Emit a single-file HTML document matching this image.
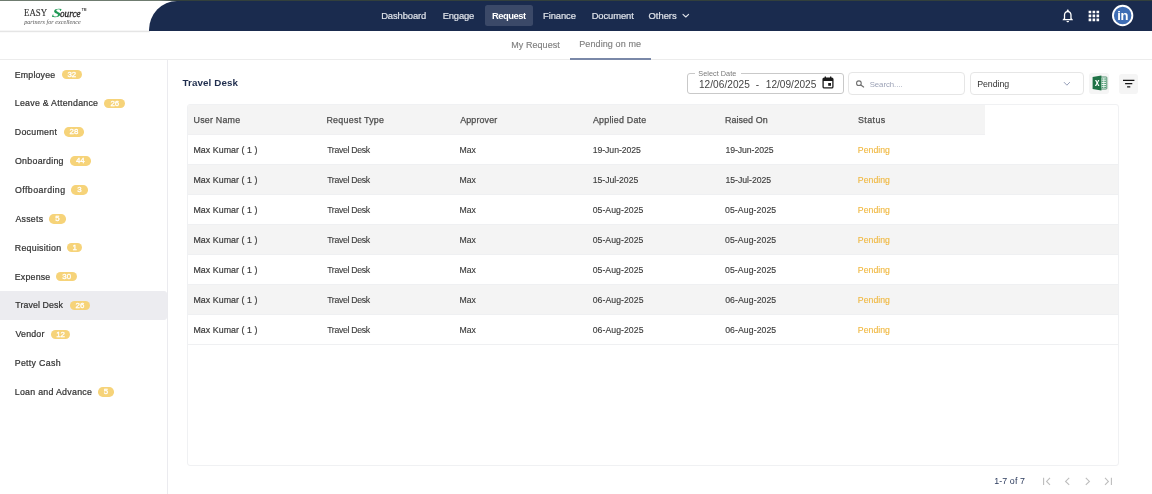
<!DOCTYPE html>
<html lang="en">
<head>
<meta charset="utf-8">
<title>Travel Desk - Pending on me</title>
<style>
*{box-sizing:border-box;margin:0;padding:0}
html,body{width:1152px;height:494px;overflow:hidden;background:#fff}
body{position:relative;font-family:"Liberation Sans",sans-serif;color:#3a3a3a;-webkit-font-smoothing:antialiased}
#app{position:absolute;left:0;top:0;width:1152px;height:494px;overflow:hidden;background:#fff;will-change:transform}
.abs{position:absolute}
.t{position:absolute;white-space:nowrap;line-height:1}
/* top strip */
#topline{left:0;top:0;width:1152px;height:1px;background:#6f7c70}
#topline2{left:160px;top:0;width:992px;height:1px;background:linear-gradient(90deg,rgba(51,64,60,0) 0,#33403c 16px)}
/* header */
#hdrshadow{left:0;top:30px;width:150px;height:3px;background:linear-gradient(#f6f6f6 0,#f6f6f6 33.3%,#e5e5e5 33.3%,#e5e5e5 66.6%,#fafafa 66.6%)}
#navy{left:149px;top:1px;width:1003px;height:29.7px;background:#1a2b4e;border-top-left-radius:28px 29px}
.nav{font-size:9.4px;color:#dfe3ea;-webkit-text-stroke:.2px #dfe3ea;top:10.6px}
#pill{left:485px;top:5.2px;width:48.3px;height:21px;background:#3b4968;border-radius:2.5px}
/* tabs */
#tabline{left:0;top:59px;width:1152px;height:1px;background:#ececec}
#tabul{left:570px;top:57.6px;width:81px;height:2px;background:#7a88a8}
.tab{font-size:9px;color:#808080;-webkit-text-stroke:.15px #808080}
/* sidebar */
#sideborder{left:167px;top:60px;width:1px;height:434px;background:#ebebef}
#sideactive{left:0;top:290.9px;width:167.2px;height:28.9px;background:#ececf0;border-radius:0 3px 3px 0}
.si{font-size:8.8px;color:#333;left:15.3px;-webkit-text-stroke:.22px #333}
.bd{position:absolute;height:9.5px;border-radius:4.75px;background:#f6d379;color:#fff;font-size:7.9px;line-height:9.7px;text-align:center;-webkit-text-stroke:.3px #fff;letter-spacing:-.1px}
/* main */
#title{font-size:10.1px;font-weight:bold;color:#1f2d4d}
#tbl{left:187px;top:104px;width:931.5px;height:361.5px;border:1px solid #f0f1f3;border-radius:3px;background:#fff}
#thead{left:188px;top:105px;width:797px;height:30px;background:#f4f4f4;box-shadow:inset 0 -1px 0 #f0f0f2;border-top-left-radius:2px}
.row{left:188px;width:929.5px;height:30px;box-shadow:inset 0 -1px 0 #eff0f2}
.alt{background:#f4f4f4}
.th{font-size:8.9px;color:#4d4d4d;-webkit-text-stroke:.25px #4d4d4d;top:114.6px}
.c1{font-size:8.8px;color:#3a3a3a;-webkit-text-stroke:.2px #3a3a3a}
.c2{font-size:8.7px;color:#3a3a3a;-webkit-text-stroke:.12px #3a3a3a}
.pend{color:#f0b840;-webkit-text-stroke:.12px #f0b840}
.dt{font-size:10.1px;color:#454545;letter-spacing:0}
</style>
</head>
<body>
<div id="app">
<div class="abs" id="hdrshadow"></div>
<div class="abs" id="navy"></div>
<div class="abs" id="topline"></div>
<div class="abs" id="topline2"></div>

<!-- logo -->
<div class="t" id="lg1" style="left:24.40px;top:7.35px;font-size:11.4px;font-family:'Liberation Serif',serif;color:#333;-webkit-text-stroke:.15px #333;transform:scaleX(.775);transform-origin:0 0;">EASY</div>
<div class="t" id="lg2" style="left:50.60px;top:6.55px;font-size:12.6px;font-family:'Liberation Serif',serif;font-style:italic;font-weight:bold;color:#1f9a55;transform:scaleX(1.32) skewX(-8deg);transform-origin:0 100%;">S</div>
<div class="t" id="lg3" style="left:60.20px;top:7.69px;font-size:11px;font-family:'Liberation Serif',serif;font-style:italic;color:#222;-webkit-text-stroke:.3px #222;transform:scaleX(.84);transform-origin:0 0;">ource</div>
<div class="t" id="lg4" style="left:81.70px;top:9.39px;font-size:3.2px;color:#333;font-weight:bold;">TM</div>
<div class="t" id="lg5" style="left:24.20px;top:19.05px;font-size:6.15px;font-family:'Liberation Serif',serif;font-style:italic;color:#555;">partners for excellence</div>

<svg class="abs" style="left:681px;top:12px" width="10" height="8" viewBox="0 0 10 8"><path d="M2 2.3 L4.8 5 L7.6 2.3" fill="none" stroke="#dfe3ea" stroke-width="1.1" stroke-linecap="round" stroke-linejoin="round"/></svg>

<!-- header icons -->
<svg class="abs" style="left:1060.2px;top:8px" width="15.5" height="15.5" viewBox="0 0 24 24"><path fill="#fff" d="M12 22c1.1 0 2-.9 2-2h-4c0 1.1.9 2 2 2zm6-6v-5c0-3.07-1.63-5.64-4.5-6.32V4c0-.83-.67-1.5-1.5-1.5s-1.5.67-1.5 1.5v.68C7.64 5.36 6 7.92 6 11v5l-2 2v1h16v-1l-2-2zm-2 1H8v-6c0-2.480 1.510-4.500 4-4.500s4 2.020 4 4.500v6z"/></svg>
<svg class="abs" style="left:1085.8px;top:8px" width="15.75" height="15.75" viewBox="0 0 24 24"><path fill="#fff" d="M4 8h4V4H4v4zm6 12h4v-4h-4v4zm-6 0h4v-4H4v4zm0-6h4v-4H4v4zm6 0h4v-4h-4v4zm6-10v4h4V4h-4zm-6 4h4V4h-4v4zm6 6h4v-4h-4v4zm0 6h4v-4h-4v4z"/></svg>
<svg class="abs" style="left:1110px;top:3px" width="26" height="26" viewBox="0 0 26 26"><circle cx="12.65" cy="12.5" r="9.7" fill="#3e6db4" stroke="#fff" stroke-width="1.9"/></svg>
<div class="t" id="avt" style="left:1117.20px;top:9.00px;font-size:13px;font-weight:bold;color:#fff;letter-spacing:-.3px;">in</div>

<div class="abs" id="pill"></div>
<div class="t nav" id="n1" style="left:381.14px;top:11.04px;font-size:9.4px;letter-spacing:-0.092px;">Dashboard</div>
<div class="t nav" id="n2" style="left:442.81px;top:11.04px;font-size:9.4px;letter-spacing:-0.200px;">Engage</div>
<div class="t nav" id="n3" style="left:492.04px;top:11.04px;font-size:9.4px;letter-spacing:-0.502px;color:#fff;font-weight:bold;-webkit-text-stroke:0;">Request</div>
<div class="t nav" id="n4" style="left:543.05px;top:11.04px;font-size:9.4px;letter-spacing:-0.081px;">Finance</div>
<div class="t nav" id="n5" style="left:591.64px;top:11.04px;font-size:9.4px;letter-spacing:-0.073px;">Document</div>
<div class="t nav" id="n6" style="left:648.55px;top:11.04px;font-size:9.4px;letter-spacing:0.000px;">Others</div>
<div class="abs" id="tabline"></div><div class="abs" id="tabul"></div>
<div class="t tab" id="tb1" style="left:511.26px;top:41.38px;font-size:9px;letter-spacing:0.057px;">My Request</div>
<div class="t tab" id="tb2" style="left:579.21px;top:40.38px;font-size:9px;letter-spacing:0.104px;">Pending on me</div>
<div class="abs" id="sideborder"></div><div class="abs" id="sideactive"></div>
<div class="t si" id="s1" style="left:14.75px;top:70.55px;font-size:8.8px;letter-spacing:0.180px;">Employee</div>
<div class="bd" style="left:61.9px;top:69.70px;width:19.7px">32</div>
<div class="t si" id="s2" style="left:14.75px;top:98.55px;font-size:8.8px;letter-spacing:0.265px;">Leave &amp; Attendance</div>
<div class="bd" style="left:104.4px;top:98.57px;width:20.6px">26</div>
<div class="t si" id="s3" style="left:14.75px;top:127.55px;font-size:8.8px;letter-spacing:0.287px;">Document</div>
<div class="bd" style="left:63.6px;top:127.44px;width:20.6px">28</div>
<div class="t si" id="s4" style="left:15.00px;top:156.55px;font-size:8.8px;letter-spacing:0.281px;">Onboarding</div>
<div class="bd" style="left:69.6px;top:156.31px;width:21.4px">44</div>
<div class="t si" id="s5" style="left:15.00px;top:185.55px;font-size:8.8px;letter-spacing:0.425px;">Offboarding</div>
<div class="bd" style="left:71.4px;top:185.18px;width:16.2px">3</div>
<div class="t si" id="s6" style="left:15.46px;top:214.55px;font-size:8.8px;letter-spacing:0.250px;">Assets</div>
<div class="bd" style="left:49.0px;top:214.05px;width:16.6px">5</div>
<div class="t si" id="s7" style="left:14.75px;top:243.55px;font-size:8.8px;letter-spacing:0.275px;">Requisition</div>
<div class="bd" style="left:67.2px;top:242.92px;width:15.0px">1</div>
<div class="t si" id="s8" style="left:14.75px;top:272.55px;font-size:8.8px;letter-spacing:0.209px;">Expense</div>
<div class="bd" style="left:56.3px;top:271.79px;width:20.7px">30</div>
<div class="t si" id="s9" style="left:15.25px;top:300.55px;font-size:8.8px;letter-spacing:0.100px;">Travel Desk</div>
<div class="bd" style="left:69.7px;top:300.66px;width:20.4px">26</div>
<div class="t si" id="s10" style="left:15.46px;top:329.55px;font-size:8.8px;letter-spacing:0.200px;">Vendor</div>
<div class="bd" style="left:51.0px;top:329.53px;width:19.2px">12</div>
<div class="t si" id="s11" style="left:14.75px;top:358.55px;font-size:8.8px;letter-spacing:0.306px;">Petty Cash</div>
<div class="t si" id="s12" style="left:14.75px;top:387.55px;font-size:8.8px;letter-spacing:0.283px;">Loan and Advance</div>
<div class="bd" style="left:97.9px;top:387.27px;width:16.0px">5</div>
<div class="t" id="title" style="left:182.49px;top:77.70px;font-size:9.8px;letter-spacing:0.100px;">Travel Desk</div>
<div id="toolbar">
<!-- date range -->
<div class="abs" id="datebox" style="left:686.6px;top:73.4px;width:157.2px;height:20.8px;border:1px solid #c9c9c9;border-radius:3px"></div>
<div class="abs" style="left:695px;top:72px;width:46px;height:4px;background:#fff"></div>
<div class="t" id="dlabel" style="left:698.30px;top:69.82px;font-size:7.3px;letter-spacing:0.030px;color:#7a7a7a;">Select Date</div>
<div class="t dt" id="d1" style="left:698.88px;top:80.45px;font-size:10.1px;letter-spacing:0.056px;">12/06/2025</div>
<div class="t dt" id="d2" style="left:755.80px;top:80.45px;font-size:10.1px;">-</div>
<div class="t dt" id="d3" style="left:765.84px;top:80.45px;font-size:10.1px;letter-spacing:-0.001px;">12/09/2025</div>
<svg class="abs" style="left:821.8px;top:76.3px" width="12" height="13" viewBox="0 0 12 13">
<rect x="1.1" y="2.1" width="9.8" height="9.8" rx="1.2" fill="none" stroke="#1c1c1c" stroke-width="1.3"/>
<rect x="1" y="2" width="10" height="3" fill="#1c1c1c"/>
<rect x="2.7" y="0.5" width="1.3" height="2.4" fill="#1c1c1c"/><rect x="8" y="0.5" width="1.3" height="2.4" fill="#1c1c1c"/>
<rect x="6.2" y="7" width="2.8" height="2.8" fill="#1c1c1c"/>
</svg>
<!-- search -->
<div class="abs" id="searchbox" style="left:848.2px;top:72.2px;width:117.2px;height:22.6px;border:1px solid #e6e6e6;border-radius:4px"></div>
<svg class="abs" style="left:855px;top:79px" width="11" height="10" viewBox="0 0 11 10"><circle cx="3.9" cy="4.2" r="2.35" fill="none" stroke="#707070" stroke-width="1.1"/><path d="M5.8 6.1 L8.6 8" stroke="#707070" stroke-width="1.25" stroke-linecap="round"/></svg>
<div class="t" id="stext" style="left:869.69px;top:81.40px;font-size:7.8px;letter-spacing:-0.052px;color:#9ca2b6;">Search....</div>
<!-- select -->
<div class="abs" id="selbox" style="left:970px;top:72.2px;width:113.6px;height:22.6px;border:1px solid #e6e6e6;border-radius:4px"></div>
<div class="t" id="seltext" style="left:977.16px;top:79.55px;font-size:8.8px;letter-spacing:-0.054px;color:#333;">Pending</div>
<svg class="abs" style="left:1062px;top:80px" width="10" height="8" viewBox="0 0 10 8"><path d="M2.2 2.4 L4.9 5.2 L7.6 2.4" fill="none" stroke="#8b94b1" stroke-width="0.9" stroke-linecap="round" stroke-linejoin="round"/></svg>
<!-- excel -->
<div class="abs" style="left:1089.2px;top:73.2px;width:20px;height:20.4px;background:#f5f5f5;border-radius:3px"></div>
<svg class="abs" id="xl" style="left:1091.6px;top:75.4px" width="16" height="16" viewBox="0 0 16 16">
<rect x="8.2" y="2" width="6.6" height="12" rx="0.6" fill="#fff" stroke="#1f7246" stroke-width="0.8"/>
<g fill="#55a27a"><rect x="9.6" y="3.4" width="1.9" height="1.3"/><rect x="12.2" y="3.4" width="1.9" height="1.3"/><rect x="9.6" y="5.6" width="1.9" height="1.3"/><rect x="12.2" y="5.6" width="1.9" height="1.3"/><rect x="9.6" y="7.8" width="1.9" height="1.3"/><rect x="12.2" y="7.8" width="1.9" height="1.3"/><rect x="9.6" y="10" width="1.9" height="1.3"/><rect x="12.2" y="10" width="1.9" height="1.3"/><rect x="9.6" y="12" width="1.9" height="1"/><rect x="12.2" y="12" width="1.9" height="1"/></g>
<path d="M0.6 2 L9.4 0.4 L9.4 15.6 L0.6 14 Z" fill="#1f7246"/>
<path d="M3 5 L4.4 5 L5.2 6.9 L6.1 5 L7.4 5 L5.9 8 L7.5 11 L6.1 11 L5.2 9 L4.3 11 L2.9 11 L4.5 8 Z" fill="#fff"/>
</svg>
<!-- filter -->
<div class="abs" style="left:1119px;top:74.2px;width:19.4px;height:19.4px;background:#f5f5f5;border-radius:3px"></div>
<svg class="abs" style="left:1122px;top:78px" width="14" height="12" viewBox="0 0 14 12"><path d="M1 2.4 H12.4 M3.1 5.7 H10.3 M5.1 8.9 H8.3" stroke="#161616" stroke-width="1.25"/></svg>
</div>


<div class="abs" id="tbl"></div><div class="abs" id="thead"></div>
<div class="t th" id="h0" style="left:193.50px;top:116.47px;font-size:8.9px;letter-spacing:0.219px;">User Name</div>
<div class="t th" id="h1" style="left:326.42px;top:116.47px;font-size:8.9px;letter-spacing:0.272px;">Request Type</div>
<div class="t th" id="h2" style="left:460.19px;top:116.47px;font-size:8.9px;letter-spacing:0.142px;">Approver</div>
<div class="t th" id="h3" style="left:592.92px;top:116.47px;font-size:8.9px;letter-spacing:0.230px;">Applied Date</div>
<div class="t th" id="h4" style="left:724.94px;top:116.47px;font-size:8.9px;letter-spacing:0.094px;">Raised On</div>
<div class="t th" id="h5" style="left:858.03px;top:116.47px;font-size:8.9px;letter-spacing:0.400px;">Status</div>
<div class="abs row" style="top:135.0px"></div>
<div class="t c1" id="r0c0" style="left:193.46px;top:145.55px;font-size:8.8px;letter-spacing:0.073px;">Max Kumar ( 1 )</div>
<div class="t c2" id="r0c1" style="left:327.20px;top:145.64px;font-size:8.7px;letter-spacing:-0.300px;">Travel Desk</div>
<div class="t c2" id="r0c2" style="left:459.50px;top:145.64px;font-size:8.7px;letter-spacing:0.000px;">Max</div>
<div class="t c2" id="r0c3" style="left:592.67px;top:145.64px;font-size:8.7px;letter-spacing:-0.050px;">19-Jun-2025</div>
<div class="t c2" id="r0c4" style="left:725.50px;top:145.64px;font-size:8.7px;letter-spacing:-0.075px;">19-Jun-2025</div>
<div class="t c2 pend" id="r0c5" style="left:857.80px;top:145.64px;font-size:8.7px;letter-spacing:0.043px;">Pending</div>
<div class="abs row alt" style="top:165.0px"></div>
<div class="t c1" id="r1c0" style="left:193.46px;top:175.55px;font-size:8.8px;letter-spacing:0.073px;">Max Kumar ( 1 )</div>
<div class="t c2" id="r1c1" style="left:327.20px;top:175.64px;font-size:8.7px;letter-spacing:-0.300px;">Travel Desk</div>
<div class="t c2" id="r1c2" style="left:459.50px;top:175.64px;font-size:8.7px;letter-spacing:0.000px;">Max</div>
<div class="t c2" id="r1c3" style="left:592.70px;top:175.64px;font-size:8.7px;letter-spacing:-0.025px;">15-Jul-2025</div>
<div class="t c2" id="r1c4" style="left:725.50px;top:175.64px;font-size:8.7px;letter-spacing:-0.025px;">15-Jul-2025</div>
<div class="t c2 pend" id="r1c5" style="left:857.80px;top:175.64px;font-size:8.7px;letter-spacing:0.043px;">Pending</div>
<div class="abs row" style="top:195.0px"></div>
<div class="t c1" id="r2c0" style="left:193.46px;top:205.55px;font-size:8.8px;letter-spacing:0.073px;">Max Kumar ( 1 )</div>
<div class="t c2" id="r2c1" style="left:327.20px;top:205.64px;font-size:8.7px;letter-spacing:-0.300px;">Travel Desk</div>
<div class="t c2" id="r2c2" style="left:459.50px;top:205.64px;font-size:8.7px;letter-spacing:0.000px;">Max</div>
<div class="t c2" id="r2c3" style="left:592.67px;top:205.64px;font-size:8.7px;letter-spacing:0.050px;">05-Aug-2025</div>
<div class="t c2" id="r2c4" style="left:724.96px;top:205.64px;font-size:8.7px;letter-spacing:0.100px;">05-Aug-2025</div>
<div class="t c2 pend" id="r2c5" style="left:857.80px;top:205.64px;font-size:8.7px;letter-spacing:0.043px;">Pending</div>
<div class="abs row alt" style="top:225.0px"></div>
<div class="t c1" id="r3c0" style="left:193.46px;top:235.55px;font-size:8.8px;letter-spacing:0.073px;">Max Kumar ( 1 )</div>
<div class="t c2" id="r3c1" style="left:327.20px;top:235.64px;font-size:8.7px;letter-spacing:-0.300px;">Travel Desk</div>
<div class="t c2" id="r3c2" style="left:459.50px;top:235.64px;font-size:8.7px;letter-spacing:0.000px;">Max</div>
<div class="t c2" id="r3c3" style="left:592.67px;top:235.64px;font-size:8.7px;letter-spacing:0.050px;">05-Aug-2025</div>
<div class="t c2" id="r3c4" style="left:724.96px;top:235.64px;font-size:8.7px;letter-spacing:0.100px;">05-Aug-2025</div>
<div class="t c2 pend" id="r3c5" style="left:857.80px;top:235.64px;font-size:8.7px;letter-spacing:0.043px;">Pending</div>
<div class="abs row" style="top:255.0px"></div>
<div class="t c1" id="r4c0" style="left:193.46px;top:265.55px;font-size:8.8px;letter-spacing:0.073px;">Max Kumar ( 1 )</div>
<div class="t c2" id="r4c1" style="left:327.20px;top:265.64px;font-size:8.7px;letter-spacing:-0.300px;">Travel Desk</div>
<div class="t c2" id="r4c2" style="left:459.50px;top:265.64px;font-size:8.7px;letter-spacing:0.000px;">Max</div>
<div class="t c2" id="r4c3" style="left:592.67px;top:265.64px;font-size:8.7px;letter-spacing:0.050px;">05-Aug-2025</div>
<div class="t c2" id="r4c4" style="left:724.96px;top:265.64px;font-size:8.7px;letter-spacing:0.100px;">05-Aug-2025</div>
<div class="t c2 pend" id="r4c5" style="left:857.80px;top:265.64px;font-size:8.7px;letter-spacing:0.043px;">Pending</div>
<div class="abs row alt" style="top:285.0px"></div>
<div class="t c1" id="r5c0" style="left:193.46px;top:295.55px;font-size:8.8px;letter-spacing:0.073px;">Max Kumar ( 1 )</div>
<div class="t c2" id="r5c1" style="left:327.20px;top:295.64px;font-size:8.7px;letter-spacing:-0.300px;">Travel Desk</div>
<div class="t c2" id="r5c2" style="left:459.50px;top:295.64px;font-size:8.7px;letter-spacing:0.000px;">Max</div>
<div class="t c2" id="r5c3" style="left:592.67px;top:295.64px;font-size:8.7px;letter-spacing:0.060px;">06-Aug-2025</div>
<div class="t c2" id="r5c4" style="left:725.18px;top:295.64px;font-size:8.7px;letter-spacing:0.080px;">06-Aug-2025</div>
<div class="t c2 pend" id="r5c5" style="left:857.80px;top:295.64px;font-size:8.7px;letter-spacing:0.043px;">Pending</div>
<div class="abs row" style="top:315.0px"></div>
<div class="t c1" id="r6c0" style="left:193.46px;top:325.55px;font-size:8.8px;letter-spacing:0.073px;">Max Kumar ( 1 )</div>
<div class="t c2" id="r6c1" style="left:327.20px;top:325.64px;font-size:8.7px;letter-spacing:-0.300px;">Travel Desk</div>
<div class="t c2" id="r6c2" style="left:459.50px;top:325.64px;font-size:8.7px;letter-spacing:0.000px;">Max</div>
<div class="t c2" id="r6c3" style="left:592.67px;top:325.64px;font-size:8.7px;letter-spacing:0.060px;">06-Aug-2025</div>
<div class="t c2" id="r6c4" style="left:725.18px;top:325.64px;font-size:8.7px;letter-spacing:0.080px;">06-Aug-2025</div>
<div class="t c2 pend" id="r6c5" style="left:857.80px;top:325.64px;font-size:8.7px;letter-spacing:0.043px;">Pending</div>
<div id="pager">
<div class="t" id="pgt" style="left:994.30px;top:477.47px;font-size:8.9px;letter-spacing:0.071px;color:#2b3a5c;">1-7 of 7</div>
<svg class="abs" style="left:1042px;top:476px" width="10" height="11" viewBox="0 0 10 11"><path d="M1.6 1.8 V9 M8 1.9 L4.6 5.4 L8 8.9" fill="none" stroke="#bdbdbd" stroke-width="1.1"/></svg>
<svg class="abs" style="left:1062px;top:476px" width="10" height="11" viewBox="0 0 10 11"><path d="M7.2 1.9 L3.6 5.4 L7.2 8.9" fill="none" stroke="#bdbdbd" stroke-width="1.1"/></svg>
<svg class="abs" style="left:1083px;top:476px" width="10" height="11" viewBox="0 0 10 11"><path d="M2.8 1.9 L6.4 5.4 L2.8 8.9" fill="none" stroke="#bdbdbd" stroke-width="1.1"/></svg>
<svg class="abs" style="left:1103px;top:476px" width="10" height="11" viewBox="0 0 10 11"><path d="M8.4 1.8 V9 M2 1.9 L5.4 5.4 L2 8.9" fill="none" stroke="#bdbdbd" stroke-width="1.1"/></svg>
</div>

</div>
</body>
</html>
